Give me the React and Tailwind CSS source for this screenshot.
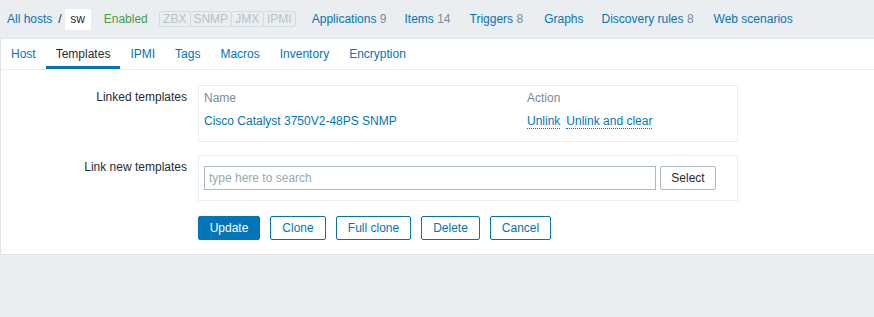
export default function App() {
  const navLinks = [
    { label: 'Applications', count: 9, ml: 'ml-[16px]' },
    { label: 'Items', count: 14, ml: 'ml-[18px]' },
    { label: 'Triggers', count: 8, ml: 'ml-[19px]' },
    { label: 'Graphs', count: null, ml: 'ml-[21px]' },
    { label: 'Discovery rules', count: 8, ml: 'ml-[18px]' },
    { label: 'Web scenarios', count: null, ml: 'ml-[20px]' },
  ];

  const statuses = [
    { label: 'ZBX', w: 'w-[32px]' },
    { label: 'SNMP', w: 'w-[42px]' },
    { label: 'JMX', w: 'w-[33px]' },
    { label: 'IPMI', w: 'w-[33px]' },
  ];

  const tabs = ['Host', 'Templates', 'IPMI', 'Tags', 'Macros', 'Inventory', 'Encryption'];

  const buttons = [
    { label: 'Clone', w: 'w-[56px]' },
    { label: 'Full clone', w: 'w-[75px]' },
    { label: 'Delete', w: 'w-[59px]' },
    { label: 'Cancel', w: 'w-[61px]' },
  ];

  return (
    <div className="min-h-screen bg-[#ebeef0] text-[12px] leading-[15px] text-[#1f2c33] font-['Liberation_Sans',Arial,sans-serif]">
      {/* host navigation */}
      <div className="flex h-[38px] items-center pl-[7px] whitespace-nowrap">
        <a className="text-[#0275b8]">All hosts</a>
        <span className="ml-[6px] text-[#1f2c33]">/</span>
        <span className="ml-[3px] flex h-[21px] w-[26px] items-center justify-center bg-white">sw</span>
        <span className="ml-[13px] text-[#429e47]">Enabled</span>
        <div className="ml-[11px] flex h-[16px]">
          {statuses.map((s) => (
            <span
              key={s.label}
              className={`${s.w} flex items-center justify-center border border-[#d4dbde] -ml-px first:ml-0 text-[#b7c2c8] rounded-[2px]`}
            >
              {s.label}
            </span>
          ))}
        </div>
        {navLinks.map((l) => (
          <a key={l.label} className={`${l.ml} text-[#0275b8]`}>
            {l.label}
            {l.count !== null && <span className="text-[#768d99]"> {l.count}</span>}
          </a>
        ))}
      </div>

      {/* panel */}
      <div className="border-y border-l border-[#dfe4e7] bg-white">
        <div className="flex h-[31px] border-b border-[#ebeef0]">
          {tabs.map((t) =>
            t === 'Templates' ? (
              <span key={t} className="flex items-center px-[10px] border-b-[3px] border-[#0275b8] pt-[3px] text-[#1f2c33]">
                {t}
              </span>
            ) : (
              <span key={t} className="flex items-center px-[10px] text-[#0275b8]">
                {t}
              </span>
            )
          )}
        </div>

        <div className="pt-[15px] pb-[14px]">
          <div className="flex">
            <div className="w-[186px] pt-[5px] text-right">Linked templates</div>
            <div className="ml-[11px] w-[540px] border border-[#ebeef0] px-[5px] pt-[5px] pb-[12px]">
              <div className="flex text-[#768d99]">
                <span className="w-[323px]">Name</span>
                <span>Action</span>
              </div>
              <div className="mt-[8px] flex">
                <a className="w-[323px] text-[#0275b8]">Cisco Catalyst 3750V2-48PS SNMP</a>
                <a className="border-b border-dotted border-[#0275b8] leading-[14px] text-[#0275b8]">Unlink</a>
                <a className="ml-[6px] border-b border-dotted border-[#0275b8] leading-[14px] text-[#0275b8]">Unlink and clear</a>
              </div>
            </div>
          </div>

          <div className="mt-[13px] flex">
            <div className="w-[186px] pt-[5px] text-right">Link new templates</div>
            <div className="ml-[11px] flex w-[540px] border border-[#ebeef0] px-[5px] py-[10px]">
              <input
                className="h-[24px] w-[452px] border border-[#acbbc2] px-[4px] text-[12px] outline-none placeholder:text-[#9aa7ae]"
                placeholder="type here to search"
              />
              <button className="ml-[4px] h-[24px] w-[56px] rounded-[2px] border border-[#acbbc2] bg-white text-[#1f2c33]">
                Select
              </button>
            </div>
          </div>

          <div className="ml-[197px] mt-[15px] flex gap-[10px]">
            <button className="h-[24px] w-[62px] rounded-[2px] border border-[#0275b8] bg-[#0275b8] text-white">
              Update
            </button>
            {buttons.map((b) => (
              <button
                key={b.label}
                className={`${b.w} h-[24px] rounded-[2px] border border-[#0275b8] bg-white text-[#0275b8]`}
              >
                {b.label}
              </button>
            ))}
          </div>
        </div>
      </div>
    </div>
  );
}
